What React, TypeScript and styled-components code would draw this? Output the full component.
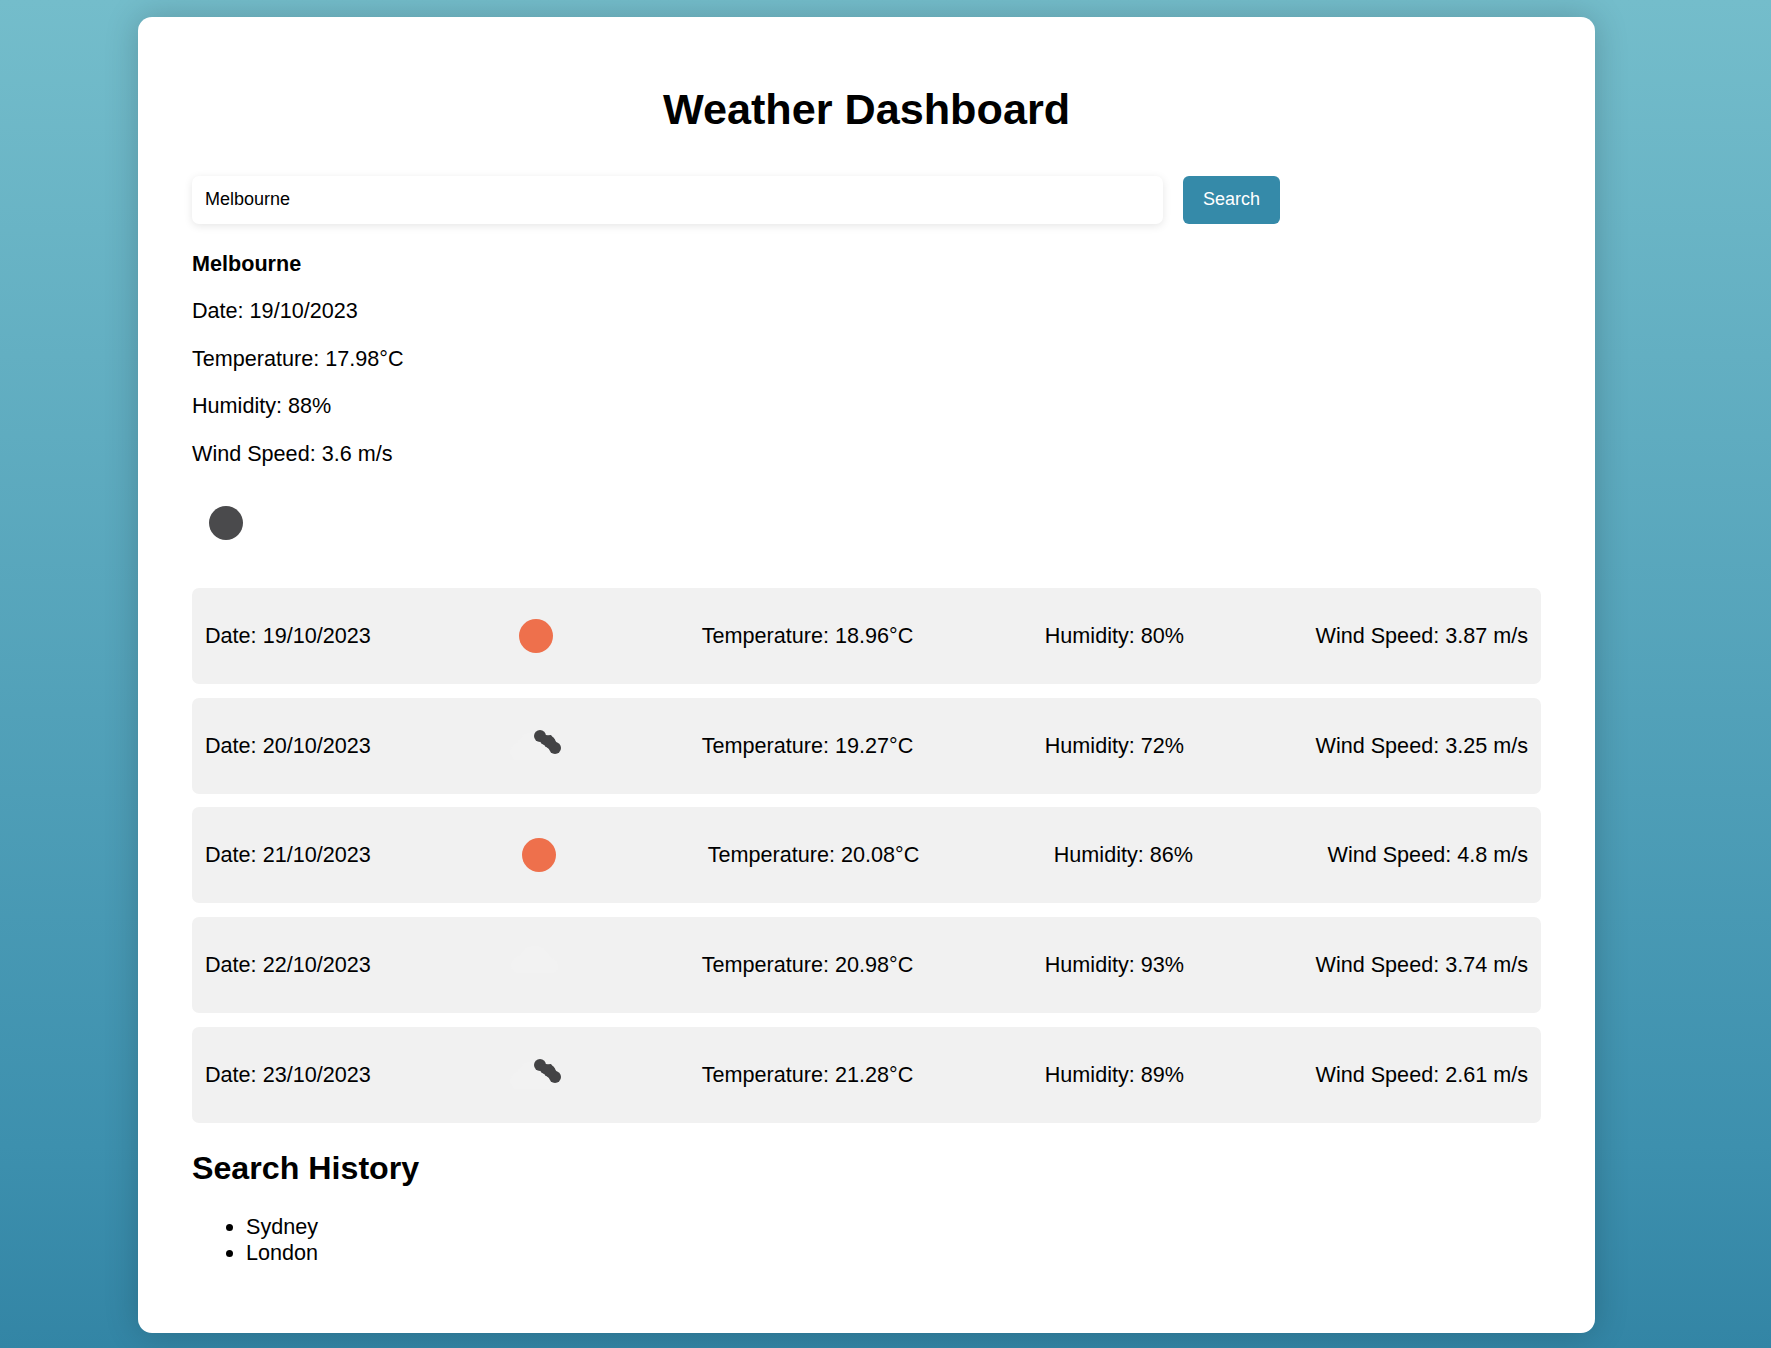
import styled, { createGlobalStyle } from "styled-components";

const GlobalStyle = createGlobalStyle`
  html, body {
    margin: 0;
    height: 100%;
  }
  body {
    min-height: 1348px;
    background: linear-gradient(to bottom, #74bdcb 0%, #3d90ae 85%, #3385a5 100%);
    font-family: "Liberation Sans", Arial, sans-serif;
    color: #000;
    overflow: hidden;
  }
`;

const Page = styled.div`
  padding: 17px 176px 14px 138px;
`;

const Card = styled.main`
  height: 1316px;
  box-sizing: border-box;
  padding: 54px 54px 0;
  background: #fff;
  border-radius: 14px;
  box-shadow: 0 0 34px rgba(0, 0, 0, 0.2);
`;

const Title = styled.h1`
  margin: 0 0 50px;
  height: 55px;
  font-size: 43.2px;
  line-height: 77px;
  font-weight: 700;
  text-align: center;
`;

const SearchRow = styled.form`
  display: flex;
  gap: 20px;
  margin-bottom: 27.6px;
`;

const SearchInput = styled.input`
  width: 971px;
  height: 48px;
  box-sizing: border-box;
  padding: 0 13px 2px;
  border: 0;
  border-radius: 7px;
  outline: 0;
  background: #fff;
  box-shadow: 0 2px 9px rgba(0, 0, 0, 0.1);
  font: 18px "Liberation Sans", Arial, sans-serif;
  color: #000;
`;

const SearchButton = styled.button`
  width: 97px;
  height: 48px;
  padding: 0 0 2px;
  border: 0;
  border-radius: 6px;
  background: #358aa9;
  color: #fff;
  font: 18px "Liberation Sans", Arial, sans-serif;
`;

const Current = styled.section`
  display: flex;
  flex-direction: column;
  gap: 24.5px;
  margin-bottom: 30.9px;
`;

const Line = styled.p<{ $bold?: boolean }>`
  margin: 0;
  font-size: 21.6px;
  line-height: 23px;
  font-weight: ${(props) => (props.$bold ? 700 : 400)};
`;

const CurrentIcon = styled.div`
  height: 68px;
`;

const Forecast = styled.section`
  display: flex;
  flex-direction: column;
  gap: 13.7px;
`;

const ForecastRow = styled.div`
  display: flex;
  align-items: center;
  justify-content: space-between;
  height: 96px;
  padding: 0 13px;
  background: #f1f1f1;
  border-radius: 7px;
  font-size: 21.6px;
`;

const HistoryTitle = styled.h2`
  margin: 27.5px 0 27px;
  font-size: 32.2px;
  line-height: 37px;
  font-weight: 700;
`;

const HistoryList = styled.ul`
  margin: 0;
  padding-left: 54px;
  font-size: 21.6px;
  line-height: 26px;
`;

type IconKind = "moon" | "sun" | "broken" | "faint";

const WeatherIcon = ({ kind }: { kind: IconKind }) => (
  <svg width="68" height="68" viewBox="0 0 68 68">
    {kind === "moon" && <circle cx="34" cy="34" r="17" fill="#4a4a4c" />}
    {kind === "sun" && <circle cx="34" cy="34" r="17" fill="#ee704c" />}
    {kind === "faint" && (
      <path
        d="M14 42a9 9 0 0 1 3-17 17 17 0 0 1 32 2 8 8 0 0 1 3 15z"
        fill="#f2f2f2"
      />
    )}
    {kind === "broken" && (
      <g>
        <path
          d="M14 48a9 9 0 0 1 1-17 16 16 0 0 1 30 0 9 9 0 0 1 3 17z"
          fill="#f2f2f2"
        />
        <g fill="#434345">
          <circle cx="38" cy="24" r="6" />
          <circle cx="43" cy="28" r="5" />
          <circle cx="47.5" cy="30" r="6" />
          <circle cx="53" cy="36" r="6" />
          <path d="M37 24l12-1 6 8-7 7-7-6z" />
        </g>
      </g>
    )}
  </svg>
);

const days: { date: string; icon: IconKind; temp: string; humidity: string; wind: string }[] = [
  { date: "19/10/2023", icon: "sun", temp: "18.96", humidity: "80", wind: "3.87" },
  { date: "20/10/2023", icon: "broken", temp: "19.27", humidity: "72", wind: "3.25" },
  { date: "21/10/2023", icon: "sun", temp: "20.08", humidity: "86", wind: "4.8" },
  { date: "22/10/2023", icon: "faint", temp: "20.98", humidity: "93", wind: "3.74" },
  { date: "23/10/2023", icon: "broken", temp: "21.28", humidity: "89", wind: "2.61" },
];

const App = () => (
  <Page>
    <GlobalStyle />
    <Card>
      <Title>Weather Dashboard</Title>
      <SearchRow onSubmit={(e) => e.preventDefault()}>
        <SearchInput defaultValue="Melbourne" />
        <SearchButton>Search</SearchButton>
      </SearchRow>
      <Current>
        <Line $bold>Melbourne</Line>
        <Line>Date: 19/10/2023</Line>
        <Line>Temperature: 17.98°C</Line>
        <Line>Humidity: 88%</Line>
        <Line>Wind Speed: 3.6 m/s</Line>
        <CurrentIcon>
          <WeatherIcon kind="moon" />
        </CurrentIcon>
      </Current>
      <Forecast>
        {days.map((day) => (
          <ForecastRow key={day.date}>
            <span>Date: {day.date}</span>
            <WeatherIcon kind={day.icon} />
            <span>Temperature: {day.temp}°C</span>
            <span>Humidity: {day.humidity}%</span>
            <span>Wind Speed: {day.wind} m/s</span>
          </ForecastRow>
        ))}
      </Forecast>
      <HistoryTitle>Search History</HistoryTitle>
      <HistoryList>
        <li>Sydney</li>
        <li>London</li>
      </HistoryList>
    </Card>
  </Page>
);

export default App;
